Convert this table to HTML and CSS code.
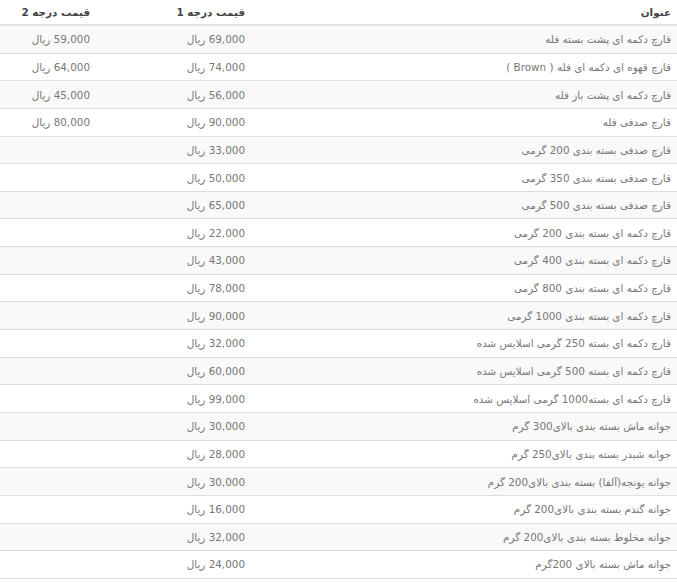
FILE: index.html
```html
<!DOCTYPE html>
<html lang="fa" dir="rtl">
<head>
<meta charset="utf-8">
<link rel="stylesheet" href="styles.css">
</head>
<body>
<table class="price-table">
<colgroup><col class="c1"><col class="c2"><col class="c3"></colgroup>
<thead>
<tr><th>عنوان</th><th>قیمت درجه 1</th><th>قیمت درجه 2</th></tr>
</thead>
<tbody>
<tr><td>قارچ دکمه ای پشت بسته فله</td><td>69,000 ریال</td><td>59,000 ریال</td></tr>
<tr><td>قارچ قهوه ای دکمه ای فله ( Brown )</td><td>74,000 ریال</td><td>64,000 ریال</td></tr>
<tr><td>قارچ دکمه ای پشت باز فله</td><td>56,000 ریال</td><td>45,000 ریال</td></tr>
<tr><td>قارچ صدفی فله</td><td>90,000 ریال</td><td>80,000 ریال</td></tr>
<tr><td>قارچ صدفی بسته بندی 200 گرمی</td><td>33,000 ریال</td><td></td></tr>
<tr><td>قارچ صدفی بسته بندی 350 گرمی</td><td>50,000 ریال</td><td></td></tr>
<tr><td>قارچ صدفی بسته بندی 500 گرمی</td><td>65,000 ریال</td><td></td></tr>
<tr><td>قارچ دکمه ای بسته بندی 200 گرمی</td><td>22,000 ریال</td><td></td></tr>
<tr><td>قارچ دکمه ای بسته بندی 400 گرمی</td><td>43,000 ریال</td><td></td></tr>
<tr><td>قارچ دکمه ای بسته بندی 800 گرمی</td><td>78,000 ریال</td><td></td></tr>
<tr><td>قارچ دکمه ای بسته بندی 1000 گرمی</td><td>90,000 ریال</td><td></td></tr>
<tr><td>قارچ دکمه ای بسته 250 گرمی اسلایس شده</td><td>32,000 ریال</td><td></td></tr>
<tr><td>قارچ دکمه ای بسته 500 گرمی اسلایس شده</td><td>60,000 ریال</td><td></td></tr>
<tr><td>قارچ دکمه ای بسته1000 گرمی اسلایس شده</td><td>99,000 ریال</td><td></td></tr>
<tr><td>جوانه ماش بسته بندی بالای300 گرم</td><td>30,000 ریال</td><td></td></tr>
<tr><td>جوانه شبدر بسته بندی بالای250 گرم</td><td>28,000 ریال</td><td></td></tr>
<tr><td>جوانه یونجه(آلفا) بسته بندی بالای200 گرم</td><td>30,000 ریال</td><td></td></tr>
<tr><td>جوانه گندم بسته بندی بالای200 گرم</td><td>16,000 ریال</td><td></td></tr>
<tr><td>جوانه مخلوط بسته بندی بالای200 گرم</td><td>32,000 ریال</td><td></td></tr>
<tr><td>جوانه ماش بسته بالای 200گرم</td><td>24,000 ریال</td><td></td></tr>
</tbody>
</table>
</body>
</html>
```
FILE: styles.css
```css
html, body {
  margin: 0;
  padding: 0;
  background: #fff;
}
body {
  font-family: Tahoma, "DejaVu Sans", sans-serif;
  font-size: 10.4px;
  color: #777;
}
.price-table {
  width: 677px;
  border-collapse: collapse;
  table-layout: fixed;
}
.c1 { width: 426px; }
.c2 { width: 155px; }
.c3 { width: 96px; }
.price-table th,
.price-table td {
  text-align: right;
  padding: 0 6px;
  white-space: nowrap;
}
.price-table th {
  height: 24px;
  color: #444;
  font-weight: bold;
  border-bottom: 2px solid #e4e4e4;
  vertical-align: middle;
}
.price-table td {
  height: 26.65px;
  border-bottom: 1px solid #dedede;
  vertical-align: middle;
}
.price-table tbody tr:nth-child(odd) td {
  background: #f9f9f9;
}
```
